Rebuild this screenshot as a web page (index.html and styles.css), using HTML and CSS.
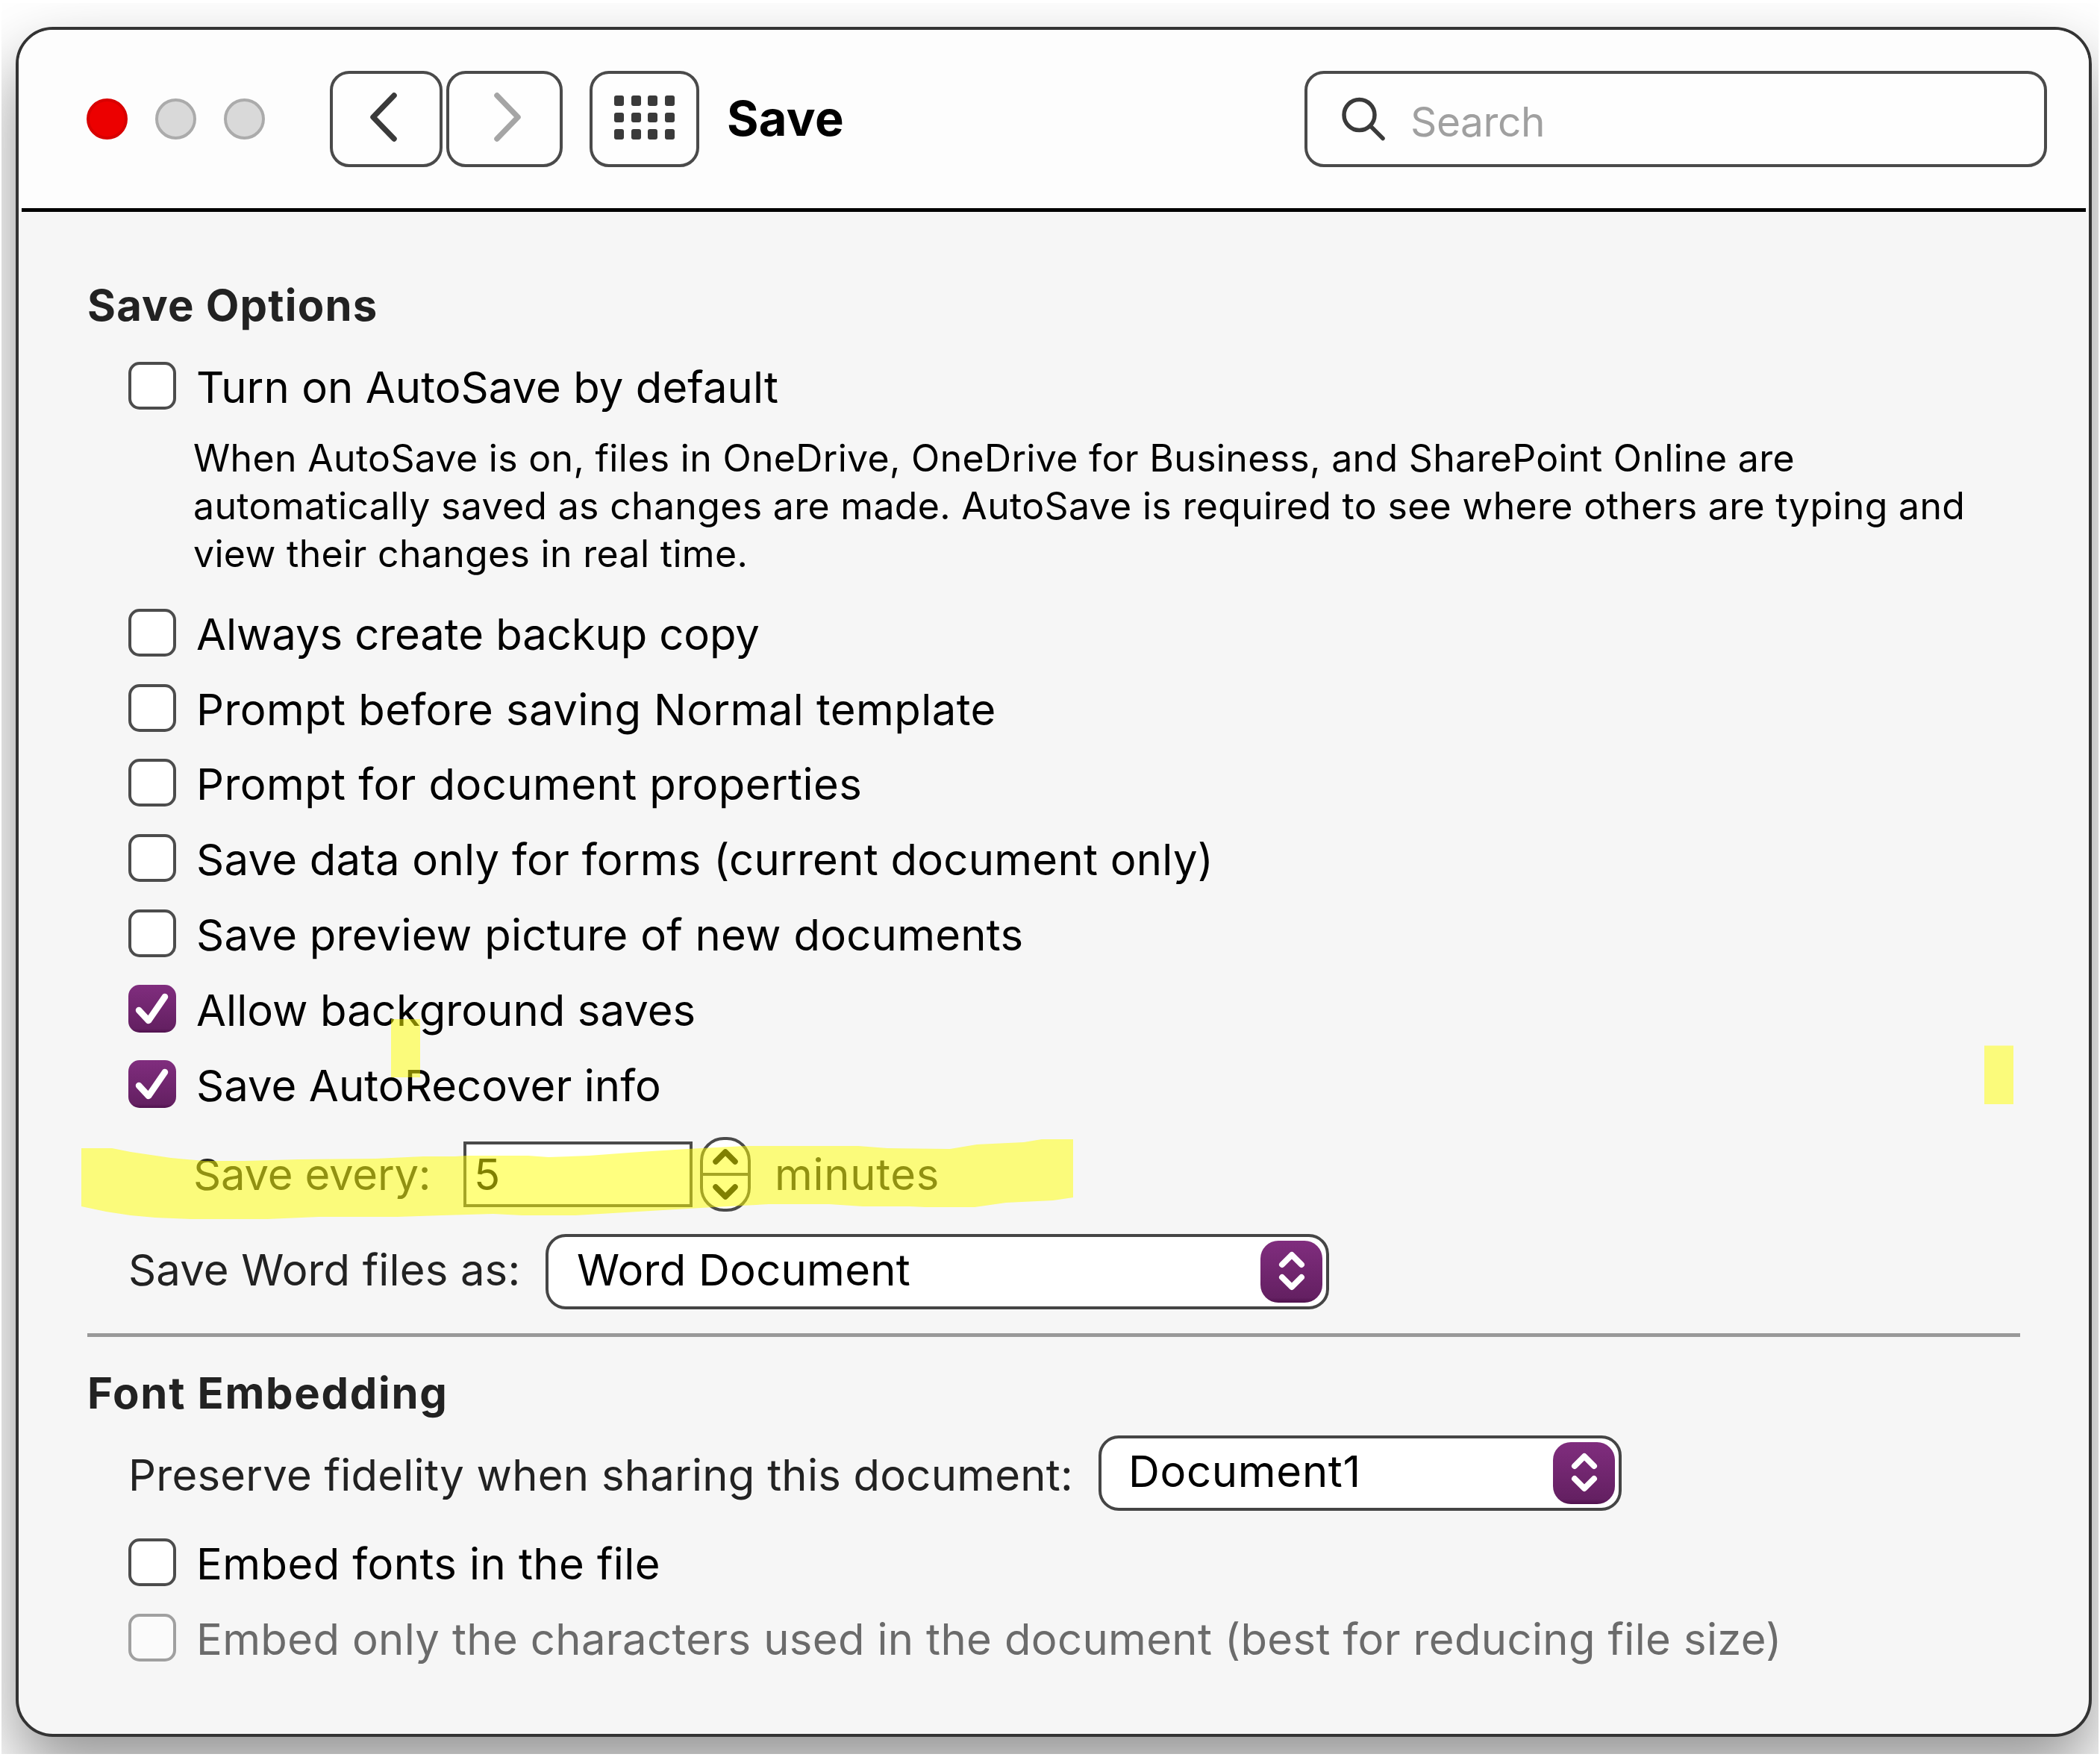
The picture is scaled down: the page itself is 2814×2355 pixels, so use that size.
FILE: index.html
```html
<!DOCTYPE html>
<html lang="en">
<head>
    <meta charset="UTF-8">
    <meta name="viewport" content="width=device-width, initial-scale=1.0">
    <title>Save</title>
    <link rel="stylesheet" href="styles.css">
</head>
<body>
    <div class="desktop">
        <div class="window">
            <div class="titlebar">
                <div class="lights">
                    <span class="light close"></span>
                    <span class="light"></span>
                    <span class="light"></span>
                </div>
                <button class="tool-button back">
                    <svg width="44" height="72" viewBox="0 0 44 72"><path d="M36 7 L8 36 L36 65"/></svg>
                </button>
                <button class="tool-button forward">
                    <svg width="44" height="72" viewBox="0 0 44 72"><path d="M8 7 L36 36 L8 65"/></svg>
                </button>
                <button class="tool-button show-all">
                    <span class="dots">
                        <i></i><i></i><i></i><i></i>
                        <i></i><i></i><i></i><i></i>
                        <i></i><i></i><i></i><i></i>
                    </span>
                </button>
                <h1 class="title">Save</h1>
                <div class="search">
                    <svg width="60" height="60" viewBox="0 0 60 60"><circle cx="24.500" cy="24" r="20.500"/><path d="M39.500 39 L56 55.500"/></svg>
                    <span>Search</span>
                </div>
            </div>
            <div class="separator"></div>

            <div class="content">
                <h2>Save Options</h2>
                <label class="check-row first"><span class="box"></span><span class="text tight">Turn on AutoSave by default</span></label>
                <p class="hint">When AutoSave is on, files in OneDrive, OneDrive for Business, and SharePoint Online are<br>automatically saved as changes are made. AutoSave is required to see where others are typing and<br>view their changes in real time.</p>
                <div class="check-list">
                    <label class="check-row"><span class="box"></span><span class="text tighter">Always create backup copy</span></label>
                    <label class="check-row"><span class="box"></span><span class="text wide">Prompt before saving Normal template</span></label>
                    <label class="check-row"><span class="box"></span><span class="text wide">Prompt for document properties</span></label>
                    <label class="check-row"><span class="box"></span><span class="text">Save data only for forms (current document only)</span></label>
                    <label class="check-row"><span class="box"></span><span class="text">Save preview picture of new documents</span></label>
                    <label class="check-row">
                        <span class="box checked"><svg width="64" height="64" viewBox="0 0 64 64"><path d="M14 34 L27 48 L49 16"/></svg></span>
                        <span class="text tight">Allow background saves</span>
                    </label>
                    <label class="check-row">
                        <span class="box checked"><svg width="64" height="64" viewBox="0 0 64 64"><path d="M14 34 L27 48 L49 16"/></svg></span>
                        <span class="text tight">Save AutoRecover info</span>
                    </label>
                </div>

                <div class="interval-row">
                    <span class="interval-label">Save every:</span>
                    <span class="number-field">5</span>
                    <span class="stepper">
                        <span class="step"><svg width="36" height="24" viewBox="0 0 36 24"><path d="M5 19 L18 6 L31 19"/></svg></span>
                        <span class="step"><svg width="36" height="24" viewBox="0 0 36 24"><path d="M5 5 L18 18 L31 5"/></svg></span>
                    </span>
                    <span class="unit">minutes</span>
                </div>

                <div class="select-row format-row">
                    <span class="select-label">Save Word files as:</span>
                    <div class="select">
                        <span>Word Document</span>
                        <span class="arrows"><svg width="40" height="56" viewBox="0 0 40 56"><path d="M7 19 L20 6 L33 19 M7 36 L20 49 L33 36"/></svg></span>
                    </div>
                </div>

                <div class="divider"></div>

                <h2 class="wide-heading">Font Embedding</h2>
                <div class="select-row embed-row">
                    <span class="select-label">Preserve fidelity when sharing this document:</span>
                    <div class="select">
                        <span class="doc-name">Document1</span>
                        <span class="arrows"><svg width="40" height="56" viewBox="0 0 40 56"><path d="M7 19 L20 6 L33 19 M7 36 L20 49 L33 36"/></svg></span>
                    </div>
                </div>
                <div class="check-list embed-list">
                    <label class="check-row"><span class="box"></span><span class="text wide">Embed fonts in the file</span></label>
                    <label class="check-row disabled"><span class="box"></span><span class="text">Embed only the characters used in the document (best for reducing file size)</span></label>
                </div>
            </div>
        </div>
    </div>

    <!-- highlighter marks over the window -->
    <svg class="marker" width="2814" height="2355" viewBox="0 0 2814 2355">
        <rect x="524" y="1366" width="39" height="78"/>
        <rect x="2659" y="1401.500" width="39" height="78.500"/>
        <path d="M109 1539 L150 1539 L175 1544 L229 1552 L274 1556 L328 1556 L400 1554 L502 1553 L568 1550 L610 1550 L625 1549 L708 1549 L735 1551 L789 1549 L843 1545 L873 1543 L921 1540 L999 1536 L1150 1536 L1189 1539 L1273 1540 L1309 1534 L1372 1531 L1396 1527 L1438 1527 L1438 1605 L1411 1609 L1348 1612 L1306 1618 L1240 1618 L1219 1617 L1156 1617 L1111 1614 L1030 1614 L994 1616 L939 1619 L855 1624 L771 1629 L700 1629 L661 1627 L592 1629 L532 1631 L427 1631 L358 1634 L256 1634 L208 1632 L175 1629 L142 1624 L109 1617 Z"/>
    </svg>
</body>
</html>
```

FILE: styles.css
```css
* {
    box-sizing: border-box;
}
body {
    margin: 0;
    background-color: #fff;
    font-family: Inter, "Liberation Sans", sans-serif;
    font-size: 58px;
    font-weight: 425;
    letter-spacing: 0.26px;
    color: #000;
}
.desktop {
    width: 2810px;
    height: 2347px;
    margin: 4px 2px;
    padding: 32px 9px 0 19px;
    overflow: hidden;
}
.window {
    width: 2782px;
    height: 2292px;
    border: 4px solid #333;
    border-radius: 50px;
    background-color: #f6f6f6;
    box-shadow: 0 45px 90px rgba(0,0,0,0.42);
    overflow: hidden;
}

/* title bar */
.titlebar {
    display: flex;
    align-items: center;
    height: 239px;
    padding: 0 56px 0 91px;
    background-color: #fdfdfd;
}
.lights {
    display: flex;
    gap: 37px;
    margin-right: 87px;
}
.light {
    width: 55px;
    height: 55px;
    border: 4px solid #ababab;
    border-radius: 50%;
    background-color: #d9d9d9;
}
.light.close {
    border-color: #d80000;
    background-color: #ec0000;
}
.tool-button {
    display: flex;
    align-items: center;
    justify-content: center;
    height: 129px;
    padding: 0;
    border: 4px solid #4a4a4a;
    border-radius: 26px;
    background-color: #fefefe;
}
.tool-button svg {
    margin-top: -5px;
    fill: none;
    stroke: #3a3a3a;
    stroke-width: 7.5;
    stroke-linecap: round;
    stroke-linejoin: round;
}
.back {
    width: 151px;
    margin-right: 5px;
}
.back svg {
    margin-right: 8px;
}
.forward {
    width: 156px;
    margin-right: 36px;
}
.forward svg {
    margin-left: 8px;
    stroke: #a5a5a5;
}
.show-all {
    width: 147px;
}
.dots {
    display: grid;
    grid-template-columns: repeat(4, 13px);
    gap: 9px 9.7px;
    margin-top: -4px;
}
.dots i {
    height: 13.5px;
    border-radius: 3px;
    background-color: #3a3a3a;
}
.title {
    margin: 0 auto 0 37px;
    padding-bottom: 3px;
    font-size: 65px;
    font-weight: 700;
    letter-spacing: 0.3px;
}
.search {
    display: flex;
    align-items: center;
    gap: 33px;
    width: 995px;
    height: 129px;
    padding-left: 45px;
    border: 4px solid #4a4a4a;
    border-radius: 26px;
    background-color: #fefefe;
    color: #a0a0a0;
    font-size: 55px;
    letter-spacing: -0.4px;
}
.search svg {
    fill: none;
    stroke: #3a3a3a;
    stroke-width: 5.5;
    stroke-linecap: round;
}
.search span {
    padding-top: 6px;
}
.separator {
    height: 5px;
    margin: 0 4px;
    background-color: #000;
}

/* content */
.content {
    padding: 95px 92px 0;
}
h2 {
    margin: 0;
    font-size: 58px;
    line-height: 60px;
    font-weight: 700;
    letter-spacing: 1.2px;
    color: #222;
}
.wide-heading {
    letter-spacing: 1.7px;
}
.check-row {
    display: flex;
    gap: 27px;
    height: 64px;
    margin-left: 55px;
}
.check-row.first {
    margin-top: 46px;
}
.box {
    width: 64px;
    height: 64px;
    border: 4px solid #4c4c4c;
    border-radius: 15px;
    background-color: #fff;
}
.box.checked {
    border: none;
    background: linear-gradient(#802d7e, #642062 92%, #4f114d);
}
.box svg {
    display: block;
    fill: none;
    stroke: #fff;
    stroke-width: 8.5;
    stroke-linecap: round;
    stroke-linejoin: round;
}
.text {
    padding-top: 2px;
    line-height: 64px;
    white-space: nowrap;
}
.tight {
    letter-spacing: 0.07px;
}
.tighter {
    letter-spacing: -0.08px;
}
.wide {
    letter-spacing: 0.42px;
}
.disabled {
    color: #6b6b6b;
    letter-spacing: 0.35px;
}
.disabled .box {
    border-color: #a0a0a0;
    background-color: #fbfbfb;
}
.hint {
    margin: 33px 0 0 142px;
    font-size: 50px;
    line-height: 64.2px;
    letter-spacing: 0.32px;
    white-space: nowrap;
}
.check-list {
    display: flex;
    flex-direction: column;
    gap: 36.9px;
    margin-top: 41px;
}

.interval-row {
    display: flex;
    align-items: center;
    height: 100px;
    margin: 39px 0 0 142px;
    color: #222;
}
.interval-label {
    width: 362px;
    letter-spacing: -0.2px;
}
.number-field {
    width: 307px;
    height: 88px;
    padding-left: 10px;
    border: 4px solid #4a4a4a;
    background-color: #fff;
    color: #000;
    line-height: 80px;
}
.stepper {
    display: flex;
    flex-direction: column;
    width: 68px;
    height: 100px;
    margin: 0 32px 0 10px;
    border: 4px solid #4a4a4a;
    border-radius: 32px;
    background-color: #fff;
}
.step {
    display: flex;
    flex: 1;
    align-items: center;
    justify-content: center;
}
.step + .step {
    border-top: 4px solid #4a4a4a;
}
.step svg {
    fill: none;
    stroke: #000;
    stroke-width: 7.5;
    stroke-linecap: round;
    stroke-linejoin: round;
}
.unit {
    letter-spacing: 0.7px;
}

.select-row {
    display: flex;
    align-items: center;
    height: 101px;
    margin-left: 55px;
    color: #222;
}
.format-row {
    margin-top: 30px;
}
.format-row .select-label {
    width: 559px;
    padding-bottom: 5px;
    letter-spacing: 0.15px;
}
.format-row .select {
    width: 1050px;
}
.embed-row {
    margin-top: 27px;
}
.embed-row .select-label {
    width: 1300px;
    padding-top: 5px;
    letter-spacing: 0.23px;
}
.embed-row .select {
    width: 701px;
}
.select {
    display: flex;
    justify-content: space-between;
    align-items: center;
    height: 101px;
    padding: 0 5px 0 38px;
    border: 4px solid #454545;
    border-radius: 27px;
    background-color: #fff;
    color: #000;
}
.select > span:first-child {
    padding-bottom: 5px;
}
.select > .doc-name {
    margin-left: -2px;
    letter-spacing: 0.7px;
}
.arrows {
    display: flex;
    align-items: center;
    justify-content: center;
    width: 83px;
    height: 83px;
    border-radius: 24px;
    background: linear-gradient(#802d7e, #642062 92%, #4f114d);
}
.arrows svg {
    fill: none;
    stroke: #fff;
    stroke-width: 8;
    stroke-linecap: round;
    stroke-linejoin: round;
}
.divider {
    height: 5px;
    margin: 32px 0 45px;
    background-color: #999;
}
.embed-list {
    margin-top: 37px;
}

.marker {
    position: absolute;
    top: 0;
    left: 0;
    fill: rgba(255,255,0,0.5);
}
```
